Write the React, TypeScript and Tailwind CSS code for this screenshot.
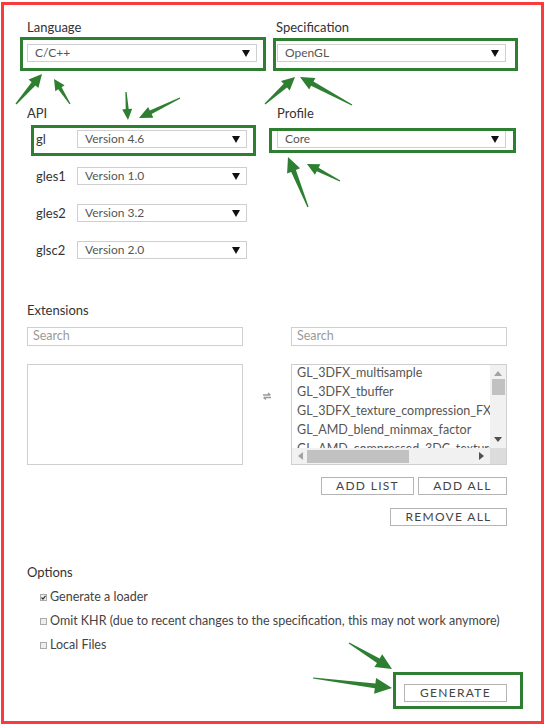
import React from "react";

const FONT = { fontFamily: "Lato, 'Open Sans', 'Liberation Sans', sans-serif" };

function Caret() {
  return (
    <svg width="8" height="7" viewBox="0 0 8 7" className="shrink-0">
      <polygon points="0,0 8,0 4,7" fill="#111" />
    </svg>
  );
}

function Select({ value, className }: { value: string; className: string }) {
  return (
    <div
      className={
        "flex h-[18px] items-center justify-between border border-[#cfcfcf] bg-white pl-[7px] pr-[6px] text-[12px] text-[#555] " +
        className
      }
    >
      <span className="leading-[16px]">{value}</span>
      <Caret />
    </div>
  );
}

function arrow(
  x1: number,
  y1: number,
  x2: number,
  y2: number,
  headLen = 13,
  headW = 13,
  shaftW = 5
) {
  const dx = x2 - x1;
  const dy = y2 - y1;
  const len = Math.hypot(dx, dy);
  const ux = dx / len;
  const uy = dy / len;
  const px = -uy;
  const py = ux;
  const bx = x2 - ux * headLen;
  const by = y2 - uy * headLen;
  const pts: [number, number][] = [
    [x1 + px * 0.6, y1 + py * 0.6],
    [bx + px * (shaftW / 2), by + py * (shaftW / 2)],
    [bx + px * (headW / 2), by + py * (headW / 2)],
    [x2, y2],
    [bx - px * (headW / 2), by - py * (headW / 2)],
    [bx - px * (shaftW / 2), by - py * (shaftW / 2)],
    [x1 - px * 0.6, y1 - py * 0.6],
  ];
  return pts.map((p) => p[0].toFixed(1) + "," + p[1].toFixed(1)).join(" ");
}

const GREEN = "#2f7f32";

function Overlay() {
  const arrows = [
    arrow(16, 104, 42, 74, 13, 13, 5),
    arrow(70, 104, 54, 79, 11, 11, 4),
    arrow(126, 92, 128, 120, 11, 10, 3),
    arrow(180, 98, 139, 118, 13, 12, 4),
    arrow(265, 104, 295, 77, 13, 13, 5),
    arrow(352, 105, 300, 77, 14, 13, 5),
    arrow(308, 207, 288, 157, 15, 14, 5),
    arrow(340, 181, 307, 164, 12, 12, 4),
    arrow(349, 643, 392, 669, 16, 15, 5),
    arrow(313, 678, 392, 688, 17, 16, 5),
  ];
  return (
    <svg
      className="pointer-events-none absolute left-0 top-0"
      width="549"
      height="727"
      viewBox="0 0 549 727"
    >
      <rect x="21.5" y="38.5" width="243" height="31" fill="none" stroke={GREEN} strokeWidth="3" />
      <rect x="274.5" y="39.5" width="242" height="30" fill="none" stroke={GREEN} strokeWidth="3" />
      <rect x="32.5" y="126.5" width="222" height="28" fill="none" stroke={GREEN} strokeWidth="3" />
      <rect x="270.5" y="129.5" width="244" height="22" fill="none" stroke={GREEN} strokeWidth="3" />
      <rect x="394.5" y="673.5" width="127" height="34" fill="none" stroke={GREEN} strokeWidth="3" />
      {arrows.map((p, i) => (
        <polygon key={i} points={p} fill={GREEN} />
      ))}
    </svg>
  );
}

function Btn({ label, className }: { label: string; className: string }) {
  return (
    <div
      className={
        "flex h-[18px] items-center justify-center border border-[#b4b4b4] bg-white text-[12px] uppercase tracking-[1.3px] text-[#444] " +
        className
      }
    >
      {label}
    </div>
  );
}

function Check({ checked }: { checked?: boolean }) {
  return (
    <span className="flex h-[7px] w-[7px] items-center justify-center border border-[#aaa] bg-[#eee]">
      {checked ? (
        <svg width="5" height="5" viewBox="0 0 5 5">
          <polyline points="0.5,2.5 2,4 4.5,0.8" fill="none" stroke="#333" strokeWidth="1.2" />
        </svg>
      ) : null}
    </span>
  );
}

const items = [
  "GL_3DFX_multisample",
  "GL_3DFX_tbuffer",
  "GL_3DFX_texture_compression_FXT1",
  "GL_AMD_blend_minmax_factor",
  "GL_AMD_compressed_3DC_texture",
];

export default function App() {
  return (
    <div className="relative h-[727px] w-[549px] overflow-hidden bg-white" style={FONT}>
      <div className="ml-[1px] mt-[2px] h-[722px] w-[543px] border-[3px] border-[#fb3b3b] pl-[23px] pt-[14px]">
        {/* Language / Specification */}
        <div className="grid grid-cols-[230px_229px] gap-x-[20px]">
          <div>
            <div className="text-[13px] leading-[16px] text-[#333]">Language</div>
            <Select value="C/C++" className="mt-[9px] w-[230px]" />
          </div>
          <div>
            <div className="-ml-[1px] text-[13px] leading-[16px] text-[#333]">Specification</div>
            <Select value="OpenGL" className="mt-[9px] w-[229px]" />
          </div>
        </div>

        {/* API / Profile */}
        <div className="mt-[43px] grid grid-cols-[230px_229px] gap-x-[20px]">
          <div>
            <div className="text-[13px] leading-[16px] text-[#333]">API</div>
            <div className="mt-[9px] flex flex-col gap-[19px]">
              {[
                ["gl", "Version 4.6"],
                ["gles1", "Version 1.0"],
                ["gles2", "Version 3.2"],
                ["glsc2", "Version 2.0"],
              ].map(([n, v]) => (
                <div key={n} className="flex items-center">
                  <div className="w-[50px] pl-[9px] text-[13px] leading-[18px] text-[#333]">{n}</div>
                  <Select value={v} className="w-[170px]" />
                </div>
              ))}
            </div>
          </div>
          <div>
            <div className="text-[13px] leading-[16px] text-[#333]">Profile</div>
            <Select value="Core" className="mt-[9px] w-[229px]" />
          </div>
        </div>

        {/* Extensions */}
        <div className="mt-[43px] text-[13px] leading-[16px] text-[#333]">Extensions</div>
        <div className="mt-[9px] flex">
          <div className="flex h-[19px] w-[216px] items-center border border-[#cfcfcf] pl-[5px] text-[12.5px] text-[#9a9a9a]">
            Search
          </div>
          <div className="w-[48px]" />
          <div className="flex h-[19px] w-[216px] items-center border border-[#cfcfcf] pl-[5px] text-[12.5px] text-[#9a9a9a]">
            Search
          </div>
        </div>
        <div className="mt-[18px] flex">
          <div className="h-[101px] w-[216px] border border-[#cfcfcf]" />
          <div className="flex w-[48px] justify-center pt-[28px]">
            <svg width="10" height="8" viewBox="0 0 10 8">
              <path d="M1 3 H8 M6 1 L8.5 3" stroke="#999" strokeWidth="1.3" fill="none" />
              <path d="M9 5.5 H2 M4 7.5 L1.5 5.5" stroke="#999" strokeWidth="1.3" fill="none" />
            </svg>
          </div>
          <div className="flex h-[101px] w-[216px] flex-col border border-[#cfcfcf]">
            <div className="flex h-[83px]">
              <div className="w-[198px] overflow-hidden">
                <div className="-mt-[2px]">
                  {items.map((t) => (
                    <div
                      key={t}
                      className="whitespace-nowrap pl-[5px] text-[12.5px] leading-[19px] text-[#555]"
                    >
                      {t}
                    </div>
                  ))}
                </div>
              </div>
              <div className="flex w-[16px] flex-col items-center bg-[#f1f1f1]">
                <svg width="8" height="5" viewBox="0 0 8 5" className="mt-[6px]">
                  <polygon points="0,5 8,5 4,0" fill="#a3a3a3" />
                </svg>
                <div className="mt-[3px] h-[16px] w-[13px] bg-[#c1c1c1]" />
                <div className="flex-1" />
                <svg width="8" height="5" viewBox="0 0 8 5" className="mb-[6px]">
                  <polygon points="0,0 8,0 4,5" fill="#505050" />
                </svg>
              </div>
            </div>
            <div className="flex h-[16px]">
              <div className="flex w-[198px] items-center bg-[#f1f1f1]">
                <svg width="5" height="8" viewBox="0 0 5 8" className="ml-[6px]">
                  <polygon points="5,0 5,8 0,4" fill="#a3a3a3" />
                </svg>
                <div className="ml-[4px] h-[13px] w-[102px] bg-[#c1c1c1]" />
                <div className="flex-1" />
                <svg width="5" height="8" viewBox="0 0 5 8" className="mr-[6px]">
                  <polygon points="0,0 0,8 5,4" fill="#505050" />
                </svg>
              </div>
              <div className="w-[16px] bg-[#dcdcdc]" />
            </div>
          </div>
        </div>

        {/* Buttons */}
        <div className="mt-[12px] flex w-[480px] justify-end gap-[4px]">
          <Btn label="Add List" className="w-[93px]" />
          <Btn label="Add All" className="w-[89px]" />
        </div>
        <div className="mt-[13px] flex w-[480px] justify-end">
          <Btn label="Remove All" className="w-[117px]" />
        </div>

        {/* Options */}
        <div className="mt-[38px] text-[13px] leading-[16px] text-[#333]">Options</div>
        <div className="mt-[5px] flex flex-col">
          {[
            ["Generate a loader", true],
            ["Omit KHR (due to recent changes to the specification, this may not work anymore)", false],
            ["Local Files", false],
          ].map(([t, c]) => (
            <div key={t as string} className="flex h-[24px] items-center gap-[3px] pl-[13px]">
              <Check checked={c as boolean} />
              <span className="text-[12.5px] text-[#444]">{t as string}</span>
            </div>
          ))}
        </div>

        {/* Generate */}
        <div className="mt-[27px] flex w-[480px] justify-end">
          <Btn label="Generate" className="w-[103px]" />
        </div>
      </div>
      <Overlay />
    </div>
  );
}
